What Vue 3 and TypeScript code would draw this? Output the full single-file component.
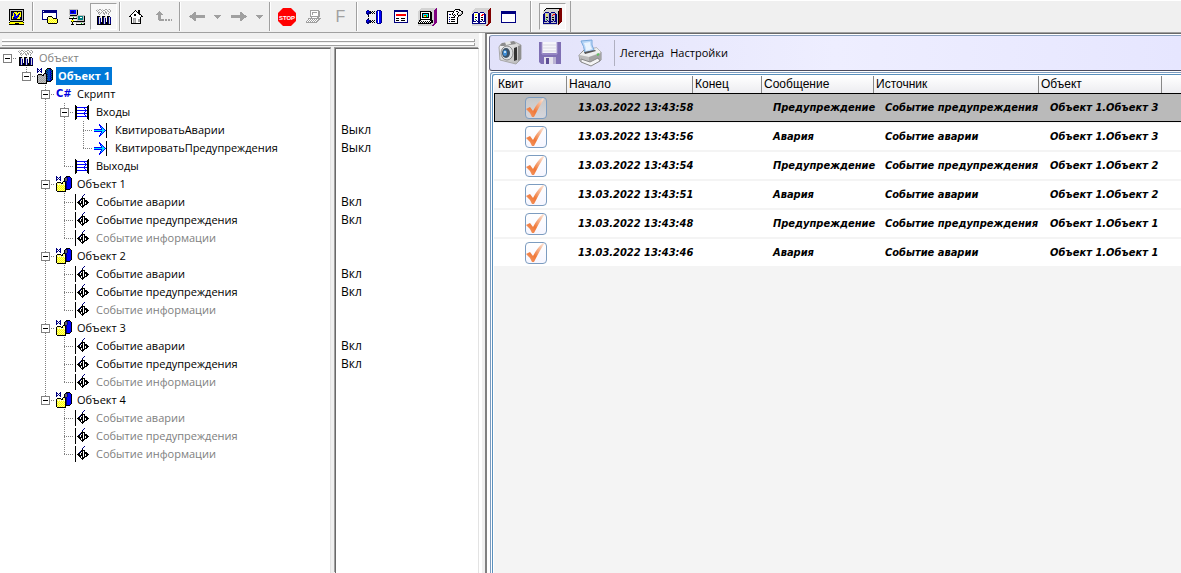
<script setup lang="ts">
import { computed, defineComponent, h, ref } from 'vue'

const palette: Record<string, string> = {
  K: '#000000', W: '#ffffff', B: '#000080', b: '#0000ff', Y: '#ffff00', y: '#ffff80',
  G: '#a0a0a0', g: '#d4d4d4', R: '#ff0000', P: '#800080', M: '#800000', C: '#00e5ff',
  S: '#c0c0c0', D: '#606060', T: '#008080', L: '#00c000',
}

const bitmaps: Record<string, string[]> = {
  mimic: [
    'KKKKKKKKKKKKKKK', 'KSSSSSSSSSSSSSK', 'KSKKKKKKKKKKKSK', 'KSKBBYYYBYYYKSK', 'KSKBYBYYYYBYKSK',
    'KSKBYbBYYBBYKSK', 'KSKBYbbYbBYYKSK', 'KSKYYbbBbBYYKSK', 'KSKYBBbbbYYBKSK', 'KSKYBBBBYYYBKSK',
    'KSKKKKKKKKKKKSK', 'KSSSSSSSSSSSSSK', '.KKKKKKKKKKKKK.', 'KYYYYYYYYYYYYYK', 'YYYYYYKKKKYYYYY', 'KKKKKKKKKKKKKKK',
  ],
  folder: [
    'BBBBBBBBBBBBBBB.', 'BWBBBBBBBBBBBBB.', 'BBBBBBBBBBBBBBB.', 'BWWWWWWWWWWWWWB.', 'BWWWWWWWWWWWWWB.',
    'BWWWWWWWWWWWWWB.', 'BWWWWWKKKKWWWWB.', 'BWWWWKyyyyKWWWB.', 'BWWWWKyyyyyKKKK.', 'BBBBBKyYyYyYyYyK',
    '.....KYyYyYyYyYK', '.....KyYyYyYyYyK', '.....KYyYyYyYyYK', '......KKKKKKKKK.',
  ],
  network: [
    'SSSSSSSSS.......', 'SbbbbbbSK.......', 'SbBBBbbSK.......', 'SbBBBbbSK.......', 'SbbbbbbSK.......',
    'SSSSSSSSK.......', '.KKKKKKKSSSSSSSS', 'SSSSSSSSSTTTTTSK', 'SWWWLWWSSTTWWTSK', 'KKKKKKKKSTTTTTSK',
    '...K....STTTTTSK', '..YYY...SSSSSSSK', '..KYKKKKKKKKKKKK', '...K...SSSSSSSSS', '...K...SWWWWLWSK', '..KKK..KKKKKKKKK',
  ],
  plant: [
    '.g.GG.g..GG.gG..', 'G.G..G.GG..G..G.', '.G.g..G..G.gG.G.', '..GG.G.G.GG..G..', '..G.G..GG.G.G...',
    '...G....G...G...', '................', '.KKKg.KKKg.KKK..', '.KBgg.KBgg.KBgB.', '.KBgB.KBgB.KBgB.',
    '.KBgB.KBgB.KBgB.', '.KBgB.KBgB.KBgB.', '.KBgB.KBgB.KBgB.', '.KBgBKKBgBKKBgB.', '.KBgBKKBgBKKBgB.', '.KKKKKKKKKKKKKK.',
  ],
  home: [
    '......K..KK.....', '.....KWK.KK.....', '....KWWWKKK.....', '...KWWWWWKK.....', '..KWWKKWWWKK....',
    '.KWWWKKWWWWWK...', 'KKWWWWWWWWWWKK..', '..KWWWWWWWWK....', '..KWGGGWWWWK....', '..KWGSGWWGGK....',
    '..KWGSGWWGGK....', '..KWGSGWWGGK....', '..KWGSGWWWWK....', '..KKKKKKKKKK....',
  ],
  levelUp: [
    '...G............', '..GGG...........', '.GGGGG..........', 'GGGGGGG.........', '..GGG...........', '..GGG...........',
    '..GGG...........', '..GGG...........', '..GGGGGG.GG.GG.G', '...GGGGG.GG.GG.G', '................',
  ],
  back: [
    '.....GG.........', '....GGG.........', '...GGGG.........', '.GGGGGGGGGGGGGGG', 'GGGGGGGGGGGGGGGG', '.GGGGGGGGGGGGGGG',
    '...GGGG.........', '....GGG.........', '.....GG.........',
  ],
  forward: [
    '.........GG.....', '.........GGG....', '.........GGGG...', 'GGGGGGGGGGGGGGG.', 'GGGGGGGGGGGGGGGG', 'GGGGGGGGGGGGGGG.',
    '.........GGGG...', '.........GGG....', '.........GG.....',
  ],
  drop: ['GGGGGGG', '.GGGGG.', '..GGG..', '...G...'],
  terminal: [
    '....GGGGGGGGG...', '....GWWWWWWWGG..', '....GWGGGGGWGG..', '....GWGWWWWWGG..', '....GWGWWWWWGG..',
    '....GWWWWWWWGG..', '....GGGGGGGGGG..', '.....GWWWWWGG...', '..GGGGGGGGGGGGG.', '..GWGWGWGWGWGG..',
    '.GWGWGWGWGWGG...', 'GWGWGWGWGWGG....', 'GGGGGGGGGGG.....',
  ],
  links: [
    '.BB........BBBB.', 'BbbBK.K.K.BbWbbB', 'BbBBBK.K..BbWbbB', 'BBBBK.K.K.BbWbbB', '.BB.......BbWbbB', '..K.......BbWbbB',
    '..K.......BbWbbB', '..........BbWbbB', '..K.......BbWbbB', '.BB.......BbWbbB', 'BbbBK.K.K.BbWbbB', 'BbBBBK.K..BbWbbB',
    'BBBBK.K.K.BbWbbB', '.BB........BBBB.',
  ],
  panel: [
    'BBBBBBBBBBBBBB', 'BBBBBBBBBBBBBB', 'BWWWWWWWWWWWWB', 'BWWWWWWWWWWWWB', 'BWRRRRRRRRRRWB', 'BWRRRRRRRRRRWB', 'BWWWWWWWWWWWWB',
    'BWWWWWWWWWWWWB', 'BWKKKWWKKKKWWB', 'BWWWWWWWWWWWWB', 'BWKKKWWKKKKWWB', 'BWWWWWWWWWWWWB', 'BBBBBBBBBBBBBB',
  ],
  station: [
    '...gggggggggggggggP', '..gggggggggggggggPP', '.gggggggggggggggPPP', 'ggKKKKKKKKKKKgggPPP', 'ggKWWWWWWWWWKKggPPP', 'ggKWKKKKKKKWKKggPPP',
    'ggKWKCCCCCKWKKggPPP', 'ggKWKCRRLCKWKKggPPP', 'ggKWKCYYLCKWKKggPPP', 'ggKWKKKKKKKWKKggPPP', 'ggKWWWWWWWWWKKggPPP', 'ggKKKKKKKKKKKKggPPP',
    'gKKWWWWWWWWWKKKgPPP', 'gKWKWKWKWKWKWKKgPPP', 'KWKWKWKWKWKWKKKgPPP', 'KKKKKKKKKKKKKgggPP.', 'gggggggggggggggPP..', 'ggggggggggggggPP...',
  ],
  properties: [
    '........KKKKK...', '.......KWWWWKK..', 'KKKKKKKWWKKWWWKK', 'KWWWWWKWWWWKWWSK', 'KWWWWKWWWWKWWSSK', 'KWBKWKWKWWKWSSK.', 'KWWWWWKWKWWKKK..',
    'KWWWWWWKWWWK....', 'KWBWKKKKWWK.....', 'KWWWWWWWWWK.....', 'KWBWKKKKWWK.....', 'KWWWWWWWWWK.....', 'KWBWKKKKWWK.....', 'KWWWWWWWWWK.....', 'KKKKKKKKKKK.....',
  ],
  book: [
    '...gggggggggggggggM', '..gggggggggggggggMM', '.gggggggggggggggMMM', 'ggggggggggggggggMMM', 'ggBBBBggBBBBggggMMM', 'gBWWWWBBWWWWBgggMMM',
    'BBWYYWBBWWRRBBggMMM', 'BBWYWWBBWRRWBBggMMM', 'BBWWWWBBWWWWBBggMMM', 'BBWKKWBBWKKWBBggMMM', 'BBWWWWBBWWWWBBggMMM', 'BBWLWWBBWKKWBBggMMM',
    'BBWWBWBBWWBWBBggMMM', 'BBBBWBBBBBWBBBggMMM', 'BWWWWWBBWWWWWBggMMM', 'BBBBBBBBBBBBBBggMM.', 'gggggggggggggggMM..', 'ggggggggggggggMM...',
  ],
  bookOn: [
    '...KKKKKKKKKKKKKKKM', '..KgggggggggggggMMM', '.KggggggggggggggMMM', 'gggggggggggggggKMMM', 'ggBBBBggBBBBgggKMMM', 'gBSSSSBBSSSSBggKMMM',
    'BBSYSSBBSSRRBBgKMMM', 'BBSYSSBBSRSSBBgKMMM', 'BBSSSSBBSSSSBBgKMMM', 'BBSKKSBBSKKSBBgKMMM', 'BBSSSSBBSSSSBBgKMMM', 'BBSLSSBBSKKSBBgKMMM',
    'BBSSBSBBSSBSBBgKMMM', 'BBBBSBBBBBSBBBgKMMM', 'BSSSSSBBSSSSSBgKMM.', 'BBBBBBBBBBBBBBgKM..', 'gggggggggggggggM...',
  ],
  window: [
    'BBBBBBBBBBBBBBB', 'BBBBBBBBBBBBBBB', 'BBBBBBBBBBBBBBB', 'BWWWWWWWWWWWWWB', 'BWWWWWWWWWWWWWB', 'BWWWWWWWWWWWWWB', 'BWWWWWWWWWWWWWB',
    'BWWWWWWWWWWWWWB', 'BWWWWWWWWWWWWWB', 'BWWWWWWWWWWWWWB', 'BWWWWWWWWWWWWWB', 'BBBBBBBBBBBBBBB',
  ],
  object: [
    'B...B.....KKKK..', 'BB.BB....KBBbbK.', 'B.B.B...KDDBbbbK', 'BB.BB...KDDBbbbK', 'B...B...KDDBbbbK', '.......KKBBbbbbK', '.KKKK.KyyKBbbbbK', 'KyyyyKKyyKBbbbbK',
    'KyWyWyWyWKBbbbbK', 'KYyYyYyYyKBbbbbK', 'KyYyYyYyYKBbbbbK', 'KYyYyYyYyKBbbbbK', 'KyYyYyYyYKBbbbK.', 'KYyYyYyYyKKKKK..', 'KyYyYyYyYK......', '.KKKKKKKKK......',
  ],
  objectOn: [
    'B...B.....KKKK..', 'BB.BB....KTTbBK.', 'B.B.B...KTBTbBTK', 'BB.BB...KBTbTbBK', 'B...B...KTBTbBTK', '.......KKBTbTbBK', '.KKKK.KGGKBTbBTK', 'KGGGGKKSGKTbTbBK',
    'KSGSGSGSGKBTbBTK', 'KGSGSGSGSKTbTbBK', 'KSGSGSGSGKBTbBTK', 'KGSGSGSGSKTbTbBK', 'KSGSGSGSGKBTbBK.', 'KGSGSGSGSKKKKK..', 'KSGSGSGSGK......', '.KKKKKKKKK......',
  ],
  ports: [
    'K............K', 'KK..........KK', 'KKbbbbbbbbbbKK', 'KK.......b..KK', 'KK........b.KK', 'KKbbbbbbbbbbKK', 'KK........b.KK', 'KK.......b..KK',
    'KKbbbbbbbbbbKK', 'KK.......b..KK', 'KK........b.KK', 'KKbbbbbbbbbbKK', 'KK..........KK', 'KK..........KK', 'K............K',
  ],
  input: [
    '............K', '.....b......K', '.....bb.....K', '......bb....K', '......bCb...K', '.......bCb..K', 'bbbbbbbbCCb.K', 'CCCCCCCCCCCbK',
    'bbbbbbbbCCb.K', '.......bCb..K', '......bCb...K', '......bb....K', '.....bb.....K', '.....b......K', '............K',
  ],
  event: [
    'K........B....', 'K.......B.....', 'K......B......', 'K......K......', 'K.....KKKK....', 'K....BKK.K....', 'K...BK.K.KKK..', 'K..KK.KK.KKKK.',
    'K.KKK.KK.K.KKK', 'K..KKKKK.K.KK.', 'K...KK.K.KKK..', 'K....K.KKK....', 'K.....KKK.....', 'K......K......', 'K.............', 'K.............',
  ],
}

// Draws a bitmap as horizontal runs of equal colour.
const PixelIcon = defineComponent({
  props: { name: { type: String, required: true } },
  setup(props) {
    return () => {
      const rows = bitmaps[props.name] ?? []
      const width = Math.max(...rows.map((row) => row.length))
      const runs = rows.flatMap((row, y) => {
        const found = []
        for (let x = 0; x < row.length; ) {
          let end = x + 1
          while (end < row.length && row[end] === row[x]) end++
          if (row[x] !== '.') found.push(h('rect', { x, y, width: end - x, height: 1, fill: palette[row[x]] }))
          x = end
        }
        return found
      })
      return h('svg', {
        width, height: rows.length, viewBox: `0 0 ${width} ${rows.length}`,
        'shape-rendering': 'crispEdges', 'aria-hidden': 'true',
      }, runs)
    }
  },
})

interface Tool { icon: string; kind?: 'drop' | 'pressed' }
const toolGroups: Tool[][] = [
  [{ icon: 'mimic' }],
  [{ icon: 'folder' }, { icon: 'network' }, { icon: 'plant', kind: 'pressed' }],
  [{ icon: 'home' }, { icon: 'levelUp' }],
  [{ icon: 'back' }, { icon: 'drop', kind: 'drop' }, { icon: 'forward' }, { icon: 'drop', kind: 'drop' }],
  [{ icon: 'stop' }, { icon: 'terminal' }, { icon: 'font' }],
  [{ icon: 'links' }, { icon: 'panel' }, { icon: 'station' }, { icon: 'properties' }, { icon: 'book' }, { icon: 'window' }],
]

interface TreeNode {
  label: string
  icon: string
  value?: string
  dim?: boolean
  selected?: boolean
  children?: TreeNode[]
}

const on = 'Вкл'
const off = 'Выкл'
function objectNode(n: number, active: boolean): TreeNode {
  return {
    label: `Объект ${n}`,
    icon: 'object',
    children: [
      { label: 'Событие аварии', icon: 'event', value: active ? on : '', dim: !active },
      { label: 'Событие предупреждения', icon: 'event', value: active ? on : '', dim: !active },
      { label: 'Событие информации', icon: 'event', dim: true },
    ],
  }
}

const root: TreeNode = {
  label: 'Объект',
  icon: 'plant',
  dim: true,
  children: [{
    label: 'Объект 1',
    icon: 'objectOn',
    selected: true,
    children: [
      {
        label: 'Скрипт',
        icon: 'script',
        children: [
          {
            label: 'Входы',
            icon: 'ports',
            children: [
              { label: 'КвитироватьАварии', icon: 'input', value: off },
              { label: 'КвитироватьПредупреждения', icon: 'input', value: off },
            ],
          },
          { label: 'Выходы', icon: 'ports' },
        ],
      },
      objectNode(1, true), objectNode(2, true), objectNode(3, true), objectNode(4, false),
    ],
  }],
}

const closed = ref(new Set<string>())
function toggle(key: string) {
  const next = new Set(closed.value)
  if (!next.delete(key)) next.add(key)
  closed.value = next
}

interface Row { key: string; node: TreeNode; guides: string[]; open: boolean }
function flatten(node: TreeNode, key: string, before: string[], own: string, out: Row[]) {
  const open = !!node.children && !closed.value.has(key)
  out.push({ key, node, guides: [...before, own], open })
  if (!open) return
  const passed = own === 'tee' ? 'line' : 'none'
  node.children!.forEach((child, i, all) =>
    flatten(child, `${key}.${i}`, [...before, passed], i < all.length - 1 ? 'tee' : 'end', out))
}
const rows = computed(() => {
  const out: Row[] = []
  flatten(root, '0', [], 'start', out)
  return out
})

const columns = ['Квит', 'Начало', 'Конец', 'Сообщение', 'Источник', 'Объект']
const alarm = { message: 'Авария', source: 'Событие аварии' }
const warning = { message: 'Предупреждение', source: 'Событие предупреждения' }
const events = ref([
  { time: '13.03.2022 13:43:58', ...warning, target: 'Объект 1.Объект 3', ack: true },
  { time: '13.03.2022 13:43:56', ...alarm, target: 'Объект 1.Объект 3', ack: true },
  { time: '13.03.2022 13:43:54', ...warning, target: 'Объект 1.Объект 2', ack: true },
  { time: '13.03.2022 13:43:51', ...alarm, target: 'Объект 1.Объект 2', ack: true },
  { time: '13.03.2022 13:43:48', ...warning, target: 'Объект 1.Объект 1', ack: true },
  { time: '13.03.2022 13:43:46', ...alarm, target: 'Объект 1.Объект 1', ack: true },
])
</script>

<template>
  <div class="app">
    <header class="toolbars">
      <div class="toolbar" role="toolbar">
        <template v-for="(group, g) in toolGroups" :key="g">
          <span v-if="g" class="separator"></span>
          <button v-for="(tool, t) in group" :key="t" type="button" class="tool" :class="tool.kind">
            <svg v-if="tool.icon === 'stop'" width="18" height="18" viewBox="0 0 18 18">
              <path d="M5 0H13L18 5V13L13 18H5L0 13V5Z" fill="#f00" />
              <text x="9" y="12" text-anchor="middle" class="stop-text">STOP</text>
            </svg>
            <span v-else-if="tool.icon === 'font'" class="font-mark">F</span>
            <PixelIcon v-else :name="tool.icon" />
          </button>
        </template>
      </div>
      <div class="toolbar second" role="toolbar">
        <button type="button" class="tool pressed"><PixelIcon name="bookOn" /></button>
      </div>
    </header>

    <div class="workspace">
      <section class="explorer">
        <div class="grips"><span class="grip"></span><span class="grip"></span></div>
        <div class="panes">
          <div class="pane names" role="tree">
            <div
              v-for="row in rows" :key="row.key" class="node" role="treeitem"
              :aria-level="row.guides.length" :aria-selected="!!row.node.selected"
            >
              <span v-for="(guide, k) in row.guides" :key="k" class="guide" :class="guide">
                <button
                  v-if="row.node.children && k === row.guides.length - 1"
                  type="button" class="expander" :class="{ shut: !row.open }" @click="toggle(row.key)"
                ></button>
              </span>
              <span class="icon">
                <span v-if="row.node.icon === 'script'" class="script-mark">C#</span>
                <PixelIcon v-else :name="row.node.icon" />
              </span>
              <span class="label" :class="{ dim: row.node.dim, selected: row.node.selected }">{{ row.node.label }}</span>
            </div>
          </div>
          <div class="pane values">
            <div v-for="row in rows" :key="row.key" class="value">{{ row.node.value }}</div>
          </div>
        </div>
      </section>

      <main class="journal">
        <nav class="actions">
          <button type="button" class="action picture">
            <svg width="26" height="26" viewBox="0 0 26 26">
              <defs>
                <linearGradient id="cam" x1="0" y1="0" x2="1" y2="1">
                  <stop offset="0" stop-color="#fafafa" /><stop offset="1" stop-color="#b4b4b4" />
                </linearGradient>
              </defs>
              <path d="M2 7L4 4L18 2L24 5V19L19 24L3 20Z" fill="url(#cam)" stroke="#a8a8a8" />
              <path d="M3 6L5 3L17 1L19 4L7 6Z" fill="#8c8c8c" />
              <path d="M8 2L13 1L14 4L9 5Z" fill="#e8e8e8" />
              <ellipse cx="10" cy="13" rx="6" ry="7" fill="#dde0e3" stroke="#8a8a8a" />
              <ellipse cx="9" cy="13" rx="4" ry="5" fill="#3d5266" />
              <ellipse cx="8" cy="13" rx="2" ry="3" fill="#3f8fd8" />
              <circle cx="8" cy="12" r="1" fill="#e8f6ff" />
              <path d="M17 8L20 7V20L17 21Z" fill="#333" />
              <path d="M21 6L24 5V19L21 21Z" fill="#8f8f8f" />
            </svg>
          </button>
          <button type="button" class="action picture">
            <svg width="22" height="22" viewBox="0 0 22 22">
              <path d="M0 0H22V22H2L0 20Z" fill="#7f6fb4" />
              <path d="M3 0H18V11H3Z" fill="#f6f6fa" />
              <path d="M4 3H17M4 6H17M4 9H17" stroke="#d8d8e2" />
              <path d="M3 0V12H18V0" fill="none" stroke="#a99bd0" />
              <path d="M5 15H17V22H5Z" fill="#e4e2ee" />
              <path d="M7 16H10V22H7Z" fill="#5e4f96" />
              <path d="M14 15H17V22H14Z" fill="#b9b2d4" />
            </svg>
          </button>
          <button type="button" class="action picture">
            <svg width="26" height="28" viewBox="0 0 26 28">
              <path d="M2 16L8 10L20 9L24 13V21L14 26L3 22Z" fill="#d6d6d6" stroke="#888" />
              <path d="M2 16L8 11L20 9L24 13L12 18Z" fill="#efefef" />
              <path d="M4 2L15 1Q14 6 17 11L8 14Q7 7 4 2Z" fill="#b9d7f8" stroke="#78a8dc" />
              <path d="M7 4L13 3Q13 7 15 10L9 12Q9 8 7 4Z" fill="#eaf4ff" />
              <path d="M7 13L18 11L19 12L8 15Z" fill="#555" />
              <path d="M2 16L12 18V25L3 22Z" fill="#bcbcbc" />
              <path d="M12 18L24 14V21L12 25Z" fill="#a4a4a4" />
              <path d="M4 20L13 23L21 19L23 22L14 27L4 23Z" fill="#f4f4f4" stroke="#888" />
              <path d="M20 16L22 15" stroke="#5fc05f" stroke-width="2" />
            </svg>
          </button>
          <span class="divider"></span>
          <button type="button" class="action">Легенда</button>
          <button type="button" class="action">Настройки</button>
        </nav>
        <div class="frame">
          <table class="events">
            <colgroup>
              <col class="c-ack"><col class="c-start"><col class="c-end"><col class="c-message">
              <col class="c-source"><col class="c-object"><col>
            </colgroup>
            <thead>
              <tr><th v-for="name in columns" :key="name" scope="col">{{ name }}</th><td></td></tr>
            </thead>
            <tbody>
              <tr v-for="(event, i) in events" :key="event.time" :class="{ current: i === 0 }">
                <td class="ack">
                  <label class="check">
                    <input v-model="event.ack" type="checkbox" :aria-label="event.time">
                    <svg v-if="event.ack" width="22" height="22" viewBox="0 0 22 22">
                      <defs>
                        <linearGradient id="tick" x1="1" y1="0" x2="0" y2="1">
                          <stop offset="0.1" stop-color="#fbd9c6" /><stop offset="0.6" stop-color="#f07838" /><stop offset="1" stop-color="#f4a070" />
                        </linearGradient>
                      </defs>
                      <path d="M1 12L5 10L8 14Q12 6 18 1L19 2Q14 10 9 20L7 20Q5 15 1 12Z" fill="url(#tick)" />
                    </svg>
                  </label>
                </td>
                <td>{{ event.time }}</td>
                <td></td>
                <td>{{ event.message }}</td>
                <td>{{ event.source }}</td>
                <td>{{ event.target }}</td>
                <td></td>
              </tr>
            </tbody>
          </table>
        </div>
      </main>
    </div>
  </div>
</template>

<style>
body { margin: 0; }
</style>

<style scoped>
.app {
  display: flex;
  flex-direction: column;
  min-height: 100vh;
  background: #f0f0f0;
  color: #000;
  font: 11px/18px "Open Sans", "Noto Sans", sans-serif;
}
button {
  margin: 0;
  padding: 0;
  border: 0;
  background: none;
  color: inherit;
  font: inherit;
}
.toolbars {
  display: flex;
  border-top: 1px solid #fff;
  border-bottom: 1px solid #a0a0a0;
}
.toolbar {
  display: flex;
  align-items: center;
  height: 29px;
  padding: 1px 8px 1px 3px;
  border-right: 1px solid #a0a0a0;
}
.toolbar.second { padding: 1px 4px 1px 7px; border-left: 1px solid #fff; }
.separator {
  width: 1px;
  height: 29px;
  margin: 0 2px;
  border-right: 1px solid #fff;
  background: #a0a0a0;
}
.tool {
  display: grid;
  place-items: center;
  box-sizing: border-box;
  width: 27px;
  height: 27px;
}
.tool.drop { width: 15px; }
.tool.pressed {
  border: 1px solid;
  border-color: #a0a0a0 #fff #fff #a0a0a0;
  background: #f8f8f8;
}
.stop-text { fill: #fff; font: bold 6px "Liberation Sans", sans-serif; }
.font-mark { color: #a0a0a0; font: 16px/18px "Liberation Sans", sans-serif; }

.workspace { display: flex; flex: 1; }
.explorer {
  display: flex;
  flex-direction: column;
  width: 479px;
  flex: none;
  border-right: 3px solid #fff;
}
.grips {
  display: flex;
  flex-direction: column;
  gap: 1px;
  padding: 6px 4px 2px 2px;
}
.grip {
  height: 2px;
  border: 1px solid;
  border-width: 0 1px 1px 0;
  border-color: #a0a0a0;
  background: #fff;
}
.panes { display: flex; flex: 1; gap: 4px; }
.pane {
  box-sizing: border-box;
  border-top: 1px solid #696969;
  border-right: 1px solid #e3e3e3;
  background: #fff;
  box-shadow: 0 -1px #a0a0a0;
}
.names { width: 331px; overflow: hidden; }
.values {
  flex: 1;
  padding-left: 5px;
  border-left: 1px solid #696969;
  box-shadow: -1px -1px #a0a0a0;
}
.value { height: 18px; font-size: 12px; }
.node { display: flex; height: 18px; margin-left: -2px; white-space: nowrap; }
.guide {
  display: grid;
  place-items: center;
  flex: none;
  width: 19px;
  --across: repeating-linear-gradient(90deg, #808080 0 1px, transparent 1px 2px);
  --down: repeating-linear-gradient(#808080 0 1px, transparent 1px 2px);
  background-repeat: no-repeat;
}
.line { background-image: var(--down); background-size: 1px 18px; background-position: 9px 0; }
.tee { background-image: var(--down), var(--across); background-size: 1px 18px, 10px 1px; background-position: 9px 0, 9px 9px; }
.end { background-image: var(--down), var(--across); background-size: 1px 10px, 10px 1px; background-position: 9px 0, 9px 9px; }
.start { background-image: var(--across); background-size: 10px 1px; background-position: 9px 9px; }
.expander {
  box-sizing: border-box;
  width: 9px;
  height: 9px;
  border: 1px solid #808080;
  background: linear-gradient(#000, #000) center / 5px 1px no-repeat #fff;
}
.expander.shut {
  background: linear-gradient(#000, #000) center / 5px 1px no-repeat, linear-gradient(#000, #000) center / 1px 5px no-repeat #fff;
}
.icon {
  display: grid;
  align-items: center;
  box-sizing: border-box;
  width: 20px;
  flex: none;
  padding-left: 1px;
}
.script-mark { color: #0000e0; font: bold 11px/18px "DejaVu Sans Condensed", "DejaVu Sans", sans-serif; }
.label { padding: 0 2px; }
.label.dim { color: #808080; }
.label.selected { background: #0078d7; color: #fff; font-weight: bold; }

.journal {
  display: flex;
  flex-direction: column;
  flex: 1;
  min-width: 0;
  margin-left: 3px;
  padding: 1px 0 0 1px;
  border-top: 1px solid #696969;
  border-left: 2px solid #808080;
  background: #fff;
}
.actions {
  display: flex;
  align-items: center;
  height: 34px;
  margin-left: 1px;
  border: 1px solid #6a6a80;
  border-color: #8aa0c0 transparent #4a4a5c #6a6a80;
  border-right: 0;
  border-radius: 3px 0 0 3px;
  background: linear-gradient(90deg, #e2e2fa, #eeeeff 50%, #e6e6ff);
}
.action { margin-right: 6px; white-space: nowrap; }
.picture {
  display: grid;
  place-items: center;
  width: 40px;
  height: 32px;
  margin: 0;
}
.divider { width: 1px; height: 26px; margin: 0 5px 0 4px; background: #b0b0c0; }
.frame {
  flex: 1;
  margin: 1px 0 0 2px;
  padding: 1px 0 0 3px;
  border: 1px solid #7c9cc0;
  border-width: 1px 0 0 1px;
  border-radius: 3px 0 0 0;
  background: #f4f4f4;
  box-shadow: inset 1px 1px #fff, inset 2px 2px #5a90bc, inset 3px 3px #fff;
}
.events {
  width: 100%;
  margin-top: 2px;
  border-collapse: separate;
  border-spacing: 0;
  table-layout: fixed;
}
.c-ack { width: 73px; }
.c-start { width: 126px; }
.c-end { width: 69px; }
.c-message { width: 112px; }
.c-source { width: 165px; }
.c-object { width: 123px; }
.events td, .events th { box-sizing: border-box; padding: 0; text-align: left; white-space: nowrap; }
thead th {
  height: 17px;
  border-right: 1px solid #888;
  font: 12px/16px "Liberation Sans", Arial, sans-serif;
}
thead tr { background: linear-gradient(#fff, #ececf0); }
.events thead th { padding: 0 0 1px 2px; }
.events thead th:first-child { padding-left: 4px; }
tbody td {
  height: 29px;
  border: 1px solid #f4f4f4;
  border-width: 1px 0;
  background: #fff;
  font: italic bold 11px/27px "DejaVu Sans Condensed", "DejaVu Sans", sans-serif;
}
.events tbody td { padding-left: 11px; }
.events tbody .ack { padding-left: 31px; }
.current td { border-color: #000; background: #bababa; }
.current .ack { border-left: 1px solid #000; }
.events .current .ack { padding-left: 30px; }
.check { display: grid; width: 22px; height: 22px; }
.check input {
  grid-area: 1 / 1;
  box-sizing: border-box;
  width: 22px;
  height: 22px;
  margin: 0;
  border: 1px solid #7c9cc0;
  border-radius: 4px;
  appearance: none;
  background: linear-gradient(#fff, #f6f6ff);
}
.current .check input { background: linear-gradient(#c8c8c8, #d6d6dc); }
.check svg { grid-area: 1 / 1; z-index: 1; pointer-events: none; }
</style>
